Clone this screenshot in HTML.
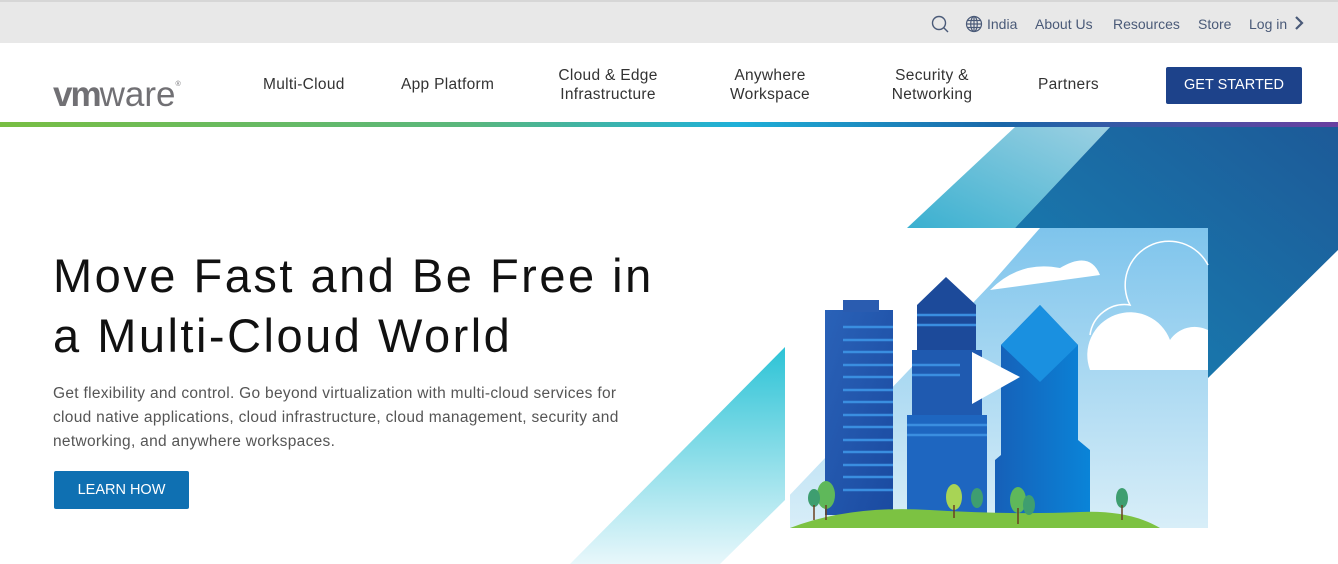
<!DOCTYPE html>
<html><head><meta charset="utf-8"><style>
*{margin:0;padding:0;box-sizing:border-box}
body{width:1338px;height:564px;overflow:hidden;background:#fff;font-family:"Liberation Sans",sans-serif;position:relative;color:#333}
.top{position:absolute;left:0;top:0;width:1338px;height:43px;background:#e8e8e8;border-top:2px solid #d6d6d6}
.top span{position:absolute;top:14px;font-size:14px;color:#4a5a78}
.nav{position:absolute;top:43px;left:0;width:1338px;height:79px;background:#fff}
.nav .it{position:absolute;font-size:15.5px;color:#333;text-align:center;line-height:19px;letter-spacing:0.3px}
.bar{position:absolute;top:122px;left:0;width:1338px;height:5px;background:linear-gradient(90deg,#78be43 0%,#5ab77d 35%,#1fb0d8 55%,#1a66a8 75%,#6a3fa0 100%)}
.btn{position:absolute;left:1166px;top:67px;width:136px;height:37px;background:#1d428a;color:#fff;font-size:14.5px;text-align:center;line-height:37px;border-radius:2px}
h1{position:absolute;left:53px;top:246px;font-weight:normal;font-size:47px;line-height:60px;color:#111;letter-spacing:2.5px}
p{position:absolute;left:53px;top:382px;font-size:15.5px;line-height:24px;color:#555;width:598px;letter-spacing:0.3px}
.learn{position:absolute;left:54px;top:471px;width:135px;height:38px;background:#0f70b2;color:#fff;font-size:14.5px;line-height:38px;text-align:center;border-radius:2px}
</style></head><body>
<div class="top">
<svg style="position:absolute;left:931px;top:13px" width="18" height="18" viewBox="0 0 18 18"><circle cx="8" cy="8" r="6.5" fill="none" stroke="#4a5a78" stroke-width="1.4"/><line x1="12.5" y1="12.5" x2="17" y2="17" stroke="#4a5a78" stroke-width="1.4"/></svg>
<svg style="position:absolute;left:965px;top:13px" width="18" height="18" viewBox="0 0 18 18" fill="none" stroke="#4a5a78" stroke-width="1.2"><circle cx="9" cy="9" r="7.5"/><ellipse cx="9" cy="9" rx="3.3" ry="7.5"/><line x1="1.5" y1="9" x2="16.5" y2="9"/><line x1="2.5" y1="5.5" x2="15.5" y2="5.5"/><line x1="2.5" y1="12.5" x2="15.5" y2="12.5"/><line x1="9" y1="1.5" x2="9" y2="16.5"/></svg>
<span style="left:987px">India</span><span style="left:1035px">About Us</span><span style="left:1113px">Resources</span><span style="left:1198px">Store</span><span style="left:1249px">Log in</span>
<svg style="position:absolute;left:1294px;top:14px" width="10" height="14" viewBox="0 0 10 14"><path d="M2 1l6 6-6 6" fill="none" stroke="#4a5a78" stroke-width="2.2"/></svg>
</div>
<div class="nav">
<div style="position:absolute;left:53px;top:24px;font-size:35px;color:#717074;letter-spacing:0px;line-height:36px"><b style="letter-spacing:-2px">vm</b>ware<sup style="font-size:7px;vertical-align:20px">®</sup></div>
<div class="it" style="left:263px;top:32px">Multi-Cloud</div>
<div class="it" style="left:401px;top:32px">App Platform</div>
<div class="it" style="left:548px;top:23px;width:120px">Cloud &amp; Edge<br>Infrastructure</div>
<div class="it" style="left:710px;top:23px;width:120px">Anywhere<br>Workspace</div>
<div class="it" style="left:872px;top:23px;width:120px">Security &amp;<br>Networking</div>
<div class="it" style="left:1038px;top:32px">Partners</div>
</div>
<div class="btn">GET STARTED</div>
<div class="bar"></div>
<svg style="position:absolute;left:0;top:127px" width="1338" height="437" viewBox="0 127 1338 437">
<defs>
<linearGradient id="lb" x1="0" y1="1" x2="1" y2="0"><stop offset="0" stop-color="#3ab0d0"/><stop offset="1" stop-color="#9cd0e2"/></linearGradient>
<linearGradient id="db" x1="0" y1="1" x2="1" y2="0"><stop offset="0" stop-color="#1782b4"/><stop offset="1" stop-color="#1d5a98"/></linearGradient>
<linearGradient id="cy" x1="0" y1="0" x2="0" y2="1"><stop offset="0" stop-color="#2cc3d6"/><stop offset="1" stop-color="#e8f7fb"/></linearGradient>
<linearGradient id="sky" x1="0" y1="0" x2="0" y2="1"><stop offset="0" stop-color="#7ec4ec"/><stop offset="1" stop-color="#d8eef8"/></linearGradient>
<linearGradient id="bl" x1="0" y1="0" x2="1" y2="1"><stop offset="0" stop-color="#2a62b8"/><stop offset="1" stop-color="#1a4aa0"/></linearGradient>
<linearGradient id="b3" x1="0" y1="0" x2="1" y2="0"><stop offset="0" stop-color="#1660b8"/><stop offset="1" stop-color="#0a84d8"/></linearGradient>
</defs>
<polygon points="1015,127 1110,127 1015,228 907,228" fill="url(#lb)"/>
<polygon points="1110,127 1338,127 1338,250 1208,378 1208,228 1015,228" fill="url(#db)"/>
<polygon points="570,564 785,347 785,500 720,564" fill="url(#cy)"/>
<rect x="785" y="228" width="423" height="300" fill="url(#sky)"/>
<polygon points="785,228 1040,228 990,285 785,500" fill="#fff"/>
<polygon points="785,347 790,342 790,528 785,528" fill="#fff"/>
<path d="M990,290 Q1020,260 1060,268 Q1090,250 1100,275 Z" fill="#fff"/>
<path d="M1090,370 a40,40 0 0 1 80,-30 a30,30 0 0 1 38,-10 v40 z" fill="#fff"/>
<path d="M1090,335 a35,35 0 0 1 40,-30 a42,42 0 0 1 78,-40" fill="none" stroke="#fff" stroke-width="1.5"/>
<rect x="825" y="310" width="68" height="205" fill="url(#bl)"/>
<rect x="843" y="300" width="36" height="12" fill="#2a5cb0"/>
<g stroke="#3a8ee0" stroke-width="2.5"><line x1="843" y1="327" x2="893" y2="327"/><line x1="843" y1="340" x2="893" y2="340"/><line x1="843" y1="352" x2="893" y2="352"/><line x1="843" y1="365" x2="893" y2="365"/><line x1="843" y1="377" x2="893" y2="377"/><line x1="843" y1="390" x2="893" y2="390"/><line x1="843" y1="402" x2="893" y2="402"/><line x1="843" y1="415" x2="893" y2="415"/><line x1="843" y1="427" x2="893" y2="427"/><line x1="843" y1="440" x2="893" y2="440"/><line x1="843" y1="452" x2="893" y2="452"/><line x1="843" y1="465" x2="893" y2="465"/><line x1="843" y1="477" x2="893" y2="477"/><line x1="843" y1="490" x2="893" y2="490"/></g>
<polygon points="917,305 946,277 976,305 976,360 917,360" fill="#1c4a9a"/>
<rect x="912" y="350" width="70" height="70" fill="#1f5ab0"/>
<rect x="907" y="415" width="80" height="100" fill="#1e66c0"/>
<g stroke="#3a8ee0" stroke-width="2.5"><line x1="917" y1="315" x2="976" y2="315"/><line x1="917" y1="325" x2="976" y2="325"/><line x1="912" y1="365" x2="960" y2="365"/><line x1="912" y1="375" x2="960" y2="375"/><line x1="907" y1="425" x2="987" y2="425"/><line x1="907" y1="435" x2="987" y2="435"/></g>
<polygon points="1001,345 1040,305 1078,345 1078,440 1090,450 1090,515 995,515 995,460 1001,455" fill="url(#b3)"/>
<polygon points="1001,345 1040,305 1078,345 1040,382" fill="#1a90e0"/>
<polygon points="972,352 1020,377 972,404" fill="#fff"/>
<path d="M790,528 Q850,505 930,510 T1080,512 Q1130,510 1160,528 Z" fill="#7cc242"/>
<g fill="#5fb85a"><ellipse cx="826" cy="495" rx="9" ry="14"/><ellipse cx="814" cy="498" rx="6" ry="9" fill="#3e9e70"/><ellipse cx="954" cy="497" rx="8" ry="13" fill="#a8d455"/><ellipse cx="977" cy="498" rx="6" ry="10" fill="#3e9e70"/><ellipse cx="1018" cy="500" rx="8" ry="13"/><ellipse cx="1029" cy="505" rx="6" ry="10" fill="#3e9e70"/><ellipse cx="1122" cy="498" rx="6" ry="10" fill="#3e9e70"/></g>
<g stroke="#6a4020" stroke-width="1.5"><line x1="826" y1="505" x2="826" y2="520"/><line x1="814" y1="505" x2="814" y2="520"/><line x1="954" y1="505" x2="954" y2="518"/><line x1="1018" y1="508" x2="1018" y2="524"/><line x1="1122" y1="505" x2="1122" y2="520"/></g>
</svg>
<h1>Move Fast and Be Free in<br>a Multi-Cloud World</h1>
<p>Get flexibility and control. Go beyond virtualization with multi-cloud services for cloud native applications, cloud infrastructure, cloud management, security and networking, and anywhere workspaces.</p>
<div class="learn">LEARN HOW</div>
</body></html>
